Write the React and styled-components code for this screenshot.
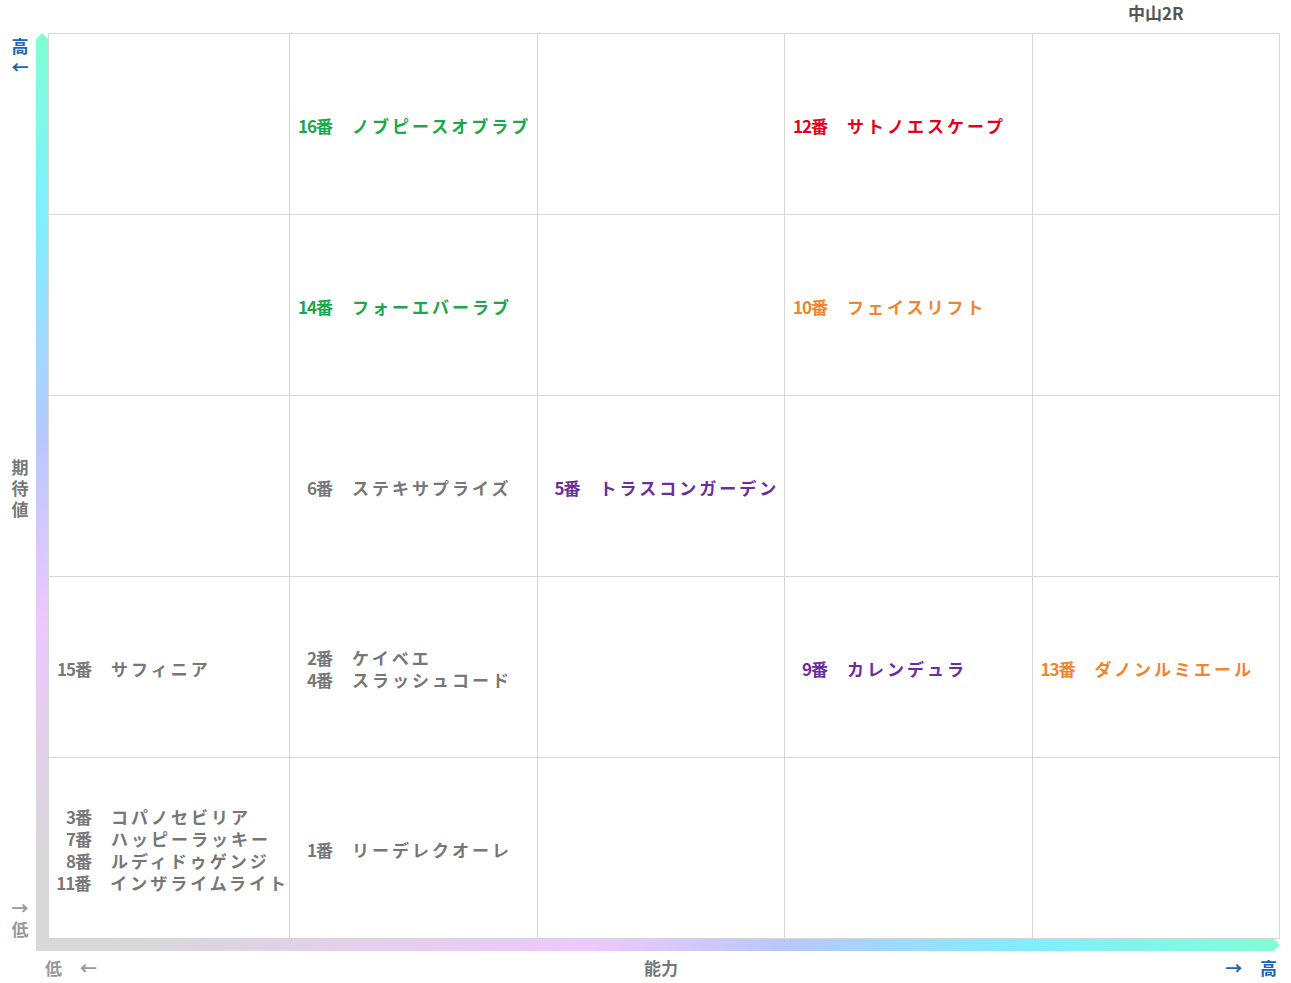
import styled, { createGlobalStyle } from "styled-components";

const Global = createGlobalStyle`
  body { margin: 0; background: #fff; font-family: "Noto Sans CJK JP", "Noto Sans", sans-serif; }
`;

const Page = styled.div`
  width: 1291px;
  height: 983px;
  position: relative;
`;

const Title = styled.div`
  height: 33px;
  padding-left: 1128px;
  font-size: 17px;
  font-weight: 700;
  color: #555;
  line-height: 26px;
`;

const Body = styled.div`
  display: grid;
  grid-template-columns: 36px 12px 1232px;
  grid-template-rows: 906px 12px;
`;

const YLabels = styled.div`
  display: flex;
  flex-direction: column;
  justify-content: space-between;
  align-items: center;
  font-size: 17px;
  font-weight: 700;
  line-height: 21px;
  padding: 2px 0 0 4px;
`;

const Stack = styled.div`
  display: flex;
  flex-direction: column;
  align-items: center;
  color: ${p => p.$color};
`;

const VBar = styled.div`
  background: linear-gradient(#7fffd4, #7fefff 20%, #b8c8ff 45%, #eec8ff 65%, #d8d8d8 92%);
  clip-path: polygon(50% 0, 100% 6px, 100% 100%, 0 100%, 0 6px);
`;

const HBar = styled.div`
  grid-column: 2 / 4;
  background: linear-gradient(90deg, #d8d8d8 5%, #eec8ff 45%, #b8c8ff 60%, #7fefff 80%, #7fffd4);
  clip-path: polygon(0 0, calc(100% - 6px) 0, 100% 50%, calc(100% - 6px) 100%, 0 100%);
`;

const Grid = styled.div`
  display: grid;
  grid-template-columns: 241px repeat(4, 1fr);
  grid-template-rows: repeat(5, 1fr);
  border-top: 1px solid #d6d6d6;
  border-right: 1px solid #d6d6d6;
`;

const Cell = styled.div`
  border-left: 1px solid #d6d6d6;
  border-bottom: 1px solid #d6d6d6;
  display: flex;
  flex-direction: column;
  justify-content: center;
  padding-left: 4px;
  padding-top: 4px;
`;

const Entry = styled.div`
  display: flex;
  font-size: 17px;
  font-weight: 700;
  line-height: 22px;
  color: ${p => p.$color};
  white-space: nowrap;
`;

const Num = styled.span`
  width: 38px;
  text-align: right;
  letter-spacing: -1px;
  margin-right: 20px;
`;

const Name = styled.span`
  letter-spacing: 3px;
`;

const XLabels = styled.div`
  display: flex;
  justify-content: space-between;
  align-items: center;
  padding: 4px 14px 0 45px;
  font-size: 17px;
  font-weight: 700;
`;

const Label = styled.span`
  color: ${p => p.$color};
  word-spacing: 14px;
`;

const G = "#1aa84a", R = "#e60019", O = "#f0852d", P = "#6b2c9e", N = "#777";

const cells = [
  [[], [[G, "16番", "ノブピースオブラブ"]], [], [[R, "12番", "サトノエスケープ"]], []],
  [[], [[G, "14番", "フォーエバーラブ"]], [], [[O, "10番", "フェイスリフト"]], []],
  [[], [[N, "6番", "ステキサプライズ"]], [[P, "5番", "トラスコンガーデン"]], [], []],
  [[[N, "15番", "サフィニア"]], [[N, "2番", "ケイベエ"], [N, "4番", "スラッシュコード"]], [], [[P, "9番", "カレンデュラ"]], [[O, "13番", "ダノンルミエール"]]],
  [[[N, "3番", "コパノセビリア"], [N, "7番", "ハッピーラッキー"], [N, "8番", "ルディドゥゲンジ"], [N, "11番", "インザライムライト"]], [[N, "1番", "リーデレクオーレ"]], [], [], []],
];

export default function App() {
  return (
    <Page>
      <Global />
      <Title>中山2R</Title>
      <Body>
        <YLabels>
          <Stack $color="#1a64b4"><span>高</span><span>←</span></Stack>
          <Stack $color="#777"><span>期</span><span>待</span><span>値</span></Stack>
          <Stack $color="#999"><span>→</span><span>低</span></Stack>
        </YLabels>
        <VBar />
        <Grid>
          {cells.flat().map((list, i) => (
            <Cell key={i}>
              {list.map(([c, n, name]) => (
                <Entry key={n} $color={c}><Num>{n}</Num><Name>{name}</Name></Entry>
              ))}
            </Cell>
          ))}
        </Grid>
        <div />
        <HBar />
      </Body>
      <XLabels>
        <Label $color="#999">低 ←</Label>
        <Label $color="#777">能力</Label>
        <Label $color="#1a64b4">→ 高</Label>
      </XLabels>
    </Page>
  );
}
